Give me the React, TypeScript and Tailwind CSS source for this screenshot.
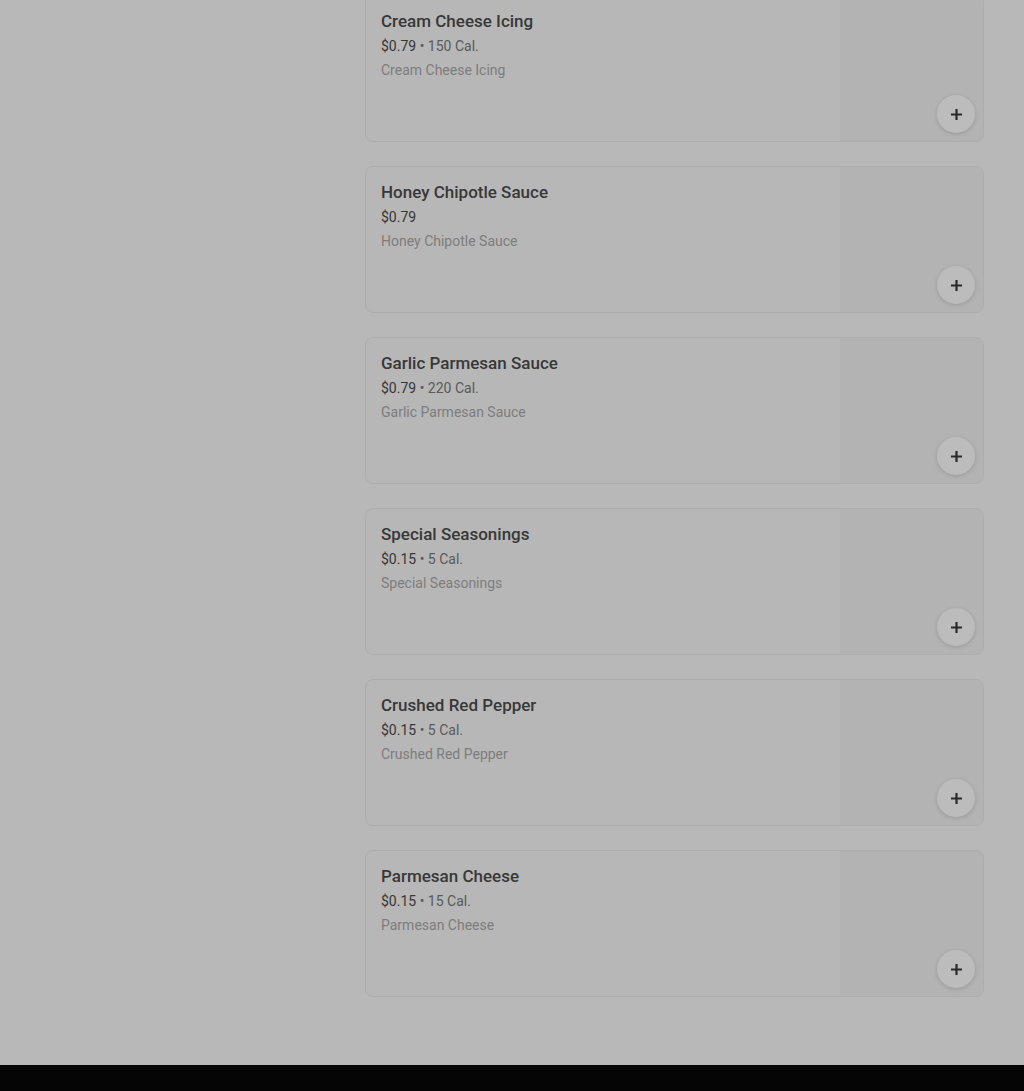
import React from "react";

const items = [
  { name: "Cream Cheese Icing", price: "$0.79", cal: "150 Cal." },
  { name: "Honey Chipotle Sauce", price: "$0.79", cal: "" },
  { name: "Garlic Parmesan Sauce", price: "$0.79", cal: "220 Cal." },
  { name: "Special Seasonings", price: "$0.15", cal: "5 Cal." },
  { name: "Crushed Red Pepper", price: "$0.15", cal: "5 Cal." },
  { name: "Parmesan Cheese", price: "$0.15", cal: "15 Cal." },
];

function Card({ name, price, cal }: { name: string; price: string; cal: string }) {
  return (
    <div className="relative h-[147px] rounded-lg border border-[#adadad] bg-[#b7b7b7] flex overflow-hidden">
      <div className="flex-1 pl-[15px] pt-[14px]">
        <div className="text-[17px] leading-[22px] font-medium text-[#383838]">{name}</div>
        <div className="mt-[4px] text-[14px] leading-[20px] text-[#363636]">
          {price}
          {cal && <span className="text-[#5a5a5a]"> • {cal}</span>}
        </div>
        <div className="mt-[4px] text-[14px] leading-[20px] text-[#7d7d7d]">{name}</div>
      </div>
      <div className="w-[143px] bg-[#b3b3b3] relative">
        <button className="absolute right-[8px] bottom-[8px] w-[38px] h-[38px] rounded-full bg-[#bcbcbc] shadow-[0_1px_4px_rgba(0,0,0,0.15)] flex items-center justify-center">
          <svg width="13" height="13" viewBox="0 0 13 13">
            <path d="M6.5 1v11M1 6.5h11" stroke="#2a2a2a" strokeWidth="2.2" />
          </svg>
        </button>
      </div>
    </div>
  );
}

export default function App() {
  return (
    <div className="w-[1024px] h-[1091px] bg-[#b8b8b8] flex flex-col overflow-hidden" style={{ fontFamily: "Roboto, 'Noto Sans', sans-serif" }}>
      <div className="flex-1 flex">
        <div className="w-[365px]" />
        <div className="w-[619px] mt-[-5px] flex flex-col gap-[24px]">
          {items.map((it) => (
            <Card key={it.name} {...it} />
          ))}
        </div>
      </div>
      <div className="h-[26px] bg-[#050505]" />
    </div>
  );
}
